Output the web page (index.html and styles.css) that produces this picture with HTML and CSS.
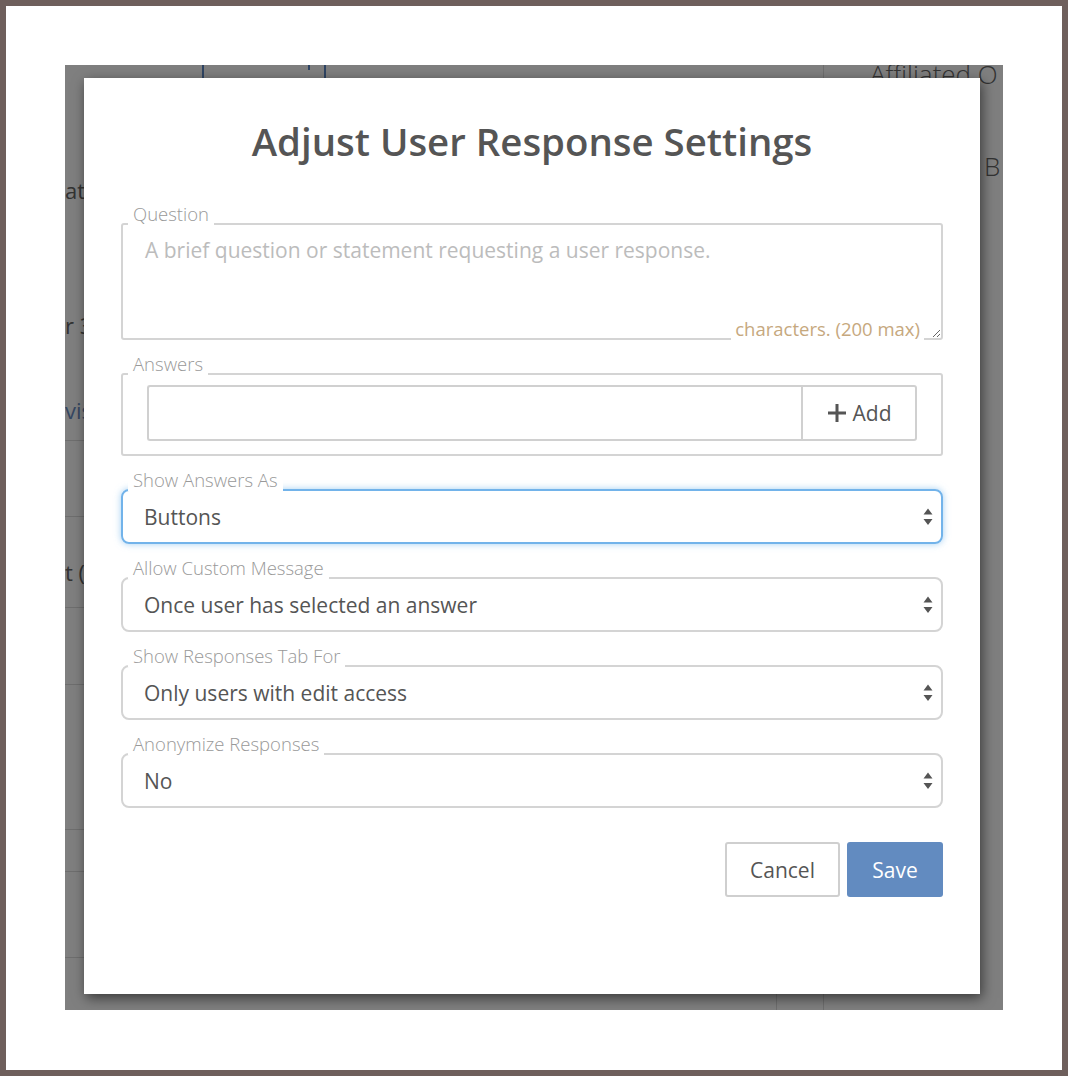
FILE: index.html
```html
<!DOCTYPE html>
<html lang="en">
<head>
  <meta charset="UTF-8">
  <title>Adjust User Response Settings</title>
  <link rel="stylesheet" href="styles.css">
</head>
<body>
  <div class="frame">
    <div class="screen">
      <!-- page behind the dialog -->
      <div class="page">
        <div class="page-main">
          <div class="bg-tabs"><span class="bg-tab"><i class="bg-dot"></i></span></div>
          <div class="bg-block">
            <p class="bg-text bg-text-1">at</p>
            <p class="bg-text bg-text-2">r 3</p>
            <p class="bg-text bg-text-3 bg-link">vis</p>
          </div>
          <div class="bg-row bg-row-1"></div>
          <div class="bg-row bg-row-2"><p class="bg-text">t (</p></div>
          <div class="bg-row bg-row-3"></div>
          <div class="bg-row bg-row-4"></div>
          <div class="bg-row bg-row-5"></div>
          <div class="bg-row bg-row-6"></div>
          <div class="bg-row-last"><span class="bg-cell"></span></div>
        </div>
        <div class="page-side">
          <p class="side-title">Affiliated O</p>
          <p class="side-text">B</p>
        </div>
      </div>

      <div class="backdrop"></div>

      <div class="modal">
        <h1 class="modal-title">Adjust User Response Settings</h1>
        <form class="form">
          <div class="field">
            <label class="field-label" for="question">Question</label>
            <textarea id="question" class="field-textarea" placeholder="A brief question or statement requesting a user response."></textarea>
            <div class="counter">characters. (200 max)</div>
          </div>

          <div class="field">
            <span class="field-label">Answers</span>
            <div class="answers-box">
              <div class="input-group">
                <input type="text" class="input-text">
                <button type="button" class="add-btn">
                  <svg width="20" height="20" viewBox="0 0 20 20"><path d="M10 1v18M1 10h18" stroke="#555" stroke-width="3" fill="none"/></svg>
                  Add
                </button>
              </div>
            </div>
          </div>

          <div class="field">
            <span class="field-label">Show Answers As</span>
            <div class="select select-focus">
              <span>Buttons</span>
              <svg class="arrows" width="10" height="18" viewBox="0 0 10 18"><path d="M5 0.5L9.5 6.5H0.5Z M0.5 11H9.5L5 17Z" fill="#555"/></svg>
            </div>
          </div>

          <div class="field">
            <span class="field-label">Allow Custom Message</span>
            <div class="select">
              <span>Once user has selected an answer</span>
              <svg class="arrows" width="10" height="18" viewBox="0 0 10 18"><path d="M5 0.5L9.5 6.5H0.5Z M0.5 11H9.5L5 17Z" fill="#555"/></svg>
            </div>
          </div>

          <div class="field">
            <span class="field-label">Show Responses Tab For</span>
            <div class="select">
              <span>Only users with edit access</span>
              <svg class="arrows" width="10" height="18" viewBox="0 0 10 18"><path d="M5 0.5L9.5 6.5H0.5Z M0.5 11H9.5L5 17Z" fill="#555"/></svg>
            </div>
          </div>

          <div class="field">
            <span class="field-label">Anonymize Responses</span>
            <div class="select">
              <span>No</span>
              <svg class="arrows" width="10" height="18" viewBox="0 0 10 18"><path d="M5 0.5L9.5 6.5H0.5Z M0.5 11H9.5L5 17Z" fill="#555"/></svg>
            </div>
          </div>

          <div class="actions">
            <button type="button" class="btn btn-cancel">Cancel</button>
            <button type="button" class="btn btn-save">Save</button>
          </div>
        </form>
      </div>
    </div>
  </div>
</body>
</html>
```

FILE: styles.css
```css
body {
  margin: 0;
  background: #6e5f5c;
  font-family: "Open Sans", "Liberation Sans", sans-serif;
}
.frame {
  margin: 6px;
  height: 1064px;
  box-sizing: border-box;
  padding: 59px 0 0 59px;
  background: #fff;
}
.screen {
  position: relative;
  width: 938px;
  height: 945px;
  overflow: hidden;
  background: #fff;
}

/* page behind */
.page {
  display: flex;
  height: 100%;
  color: #666;
}
.page-main {
  flex: 0 0 758px;
  display: flex;
  flex-direction: column;
}
.bg-tabs {
  height: 13px;
}
.bg-tab {
  display: block;
  position: relative;
  margin-left: 137px;
  width: 120px;
  height: 20px;
  border-left: 2px solid #5d88c6;
  border-right: 2px solid #5d88c6;
}
.bg-dot {
  position: absolute;
  left: 104px;
  top: 0;
  width: 2px;
  height: 5px;
  background: #5d88c6;
}
.bg-block {
  height: 363px;
  border-bottom: 1px solid #ddd;
  box-sizing: border-box;
}
.bg-text {
  margin: 0;
  font-size: 22px;
  line-height: 30px;
  white-space: nowrap;
}
.bg-text-1 {
  margin-top: 97px;
}
.bg-text-2 {
  margin-top: 105px;
}
.bg-text-3 {
  margin-top: 55px;
}
.bg-link {
  color: #6d8fc4;
}
.bg-row {
  border-bottom: 1px solid #ddd;
  box-sizing: border-box;
}
.bg-row-1 { height: 76px; }
.bg-row-2 { height: 91px; padding-top: 40px; }
.bg-row-3 { height: 77px; }
.bg-row-4 { height: 145px; }
.bg-row-5 { height: 42px; }
.bg-row-6 { height: 86px; }
.bg-row-last {
  flex: 1;
}
.bg-cell {
  display: block;
  margin-left: 711px;
  width: 1px;
  height: 100%;
  background: #ddd;
}
.page-side {
  flex: 1;
  min-width: 0;
  border-left: 1px solid #ddd;
}
.side-title {
  margin: -6px 0 0;
  padding-left: 46px;
  font-size: 26px;
  font-weight: 300;
  line-height: 30px;
  white-space: nowrap;
}
.side-text {
  margin: 62px 0 0;
  padding-left: 160px;
  font-size: 26px;
  font-weight: 300;
  line-height: 30px;
}

.backdrop {
  position: absolute;
  inset: 0;
  background: rgba(0, 0, 0, 0.5);
}

/* dialog */
.modal {
  position: absolute;
  top: 13px;
  left: 19px;
  width: 896px;
  height: 916px;
  box-sizing: border-box;
  padding: 40px 37px 0;
  background: #fff;
  box-shadow: 2px 4px 12px rgba(0, 0, 0, 0.55);
}
.modal-title {
  margin: 0 0 38px;
  text-align: center;
  font-size: 38.4px;
  font-weight: 600;
  line-height: 47px;
  color: #555;
}
.form {
  display: flex;
  flex-direction: column;
  gap: 13px;
}
.field {
  display: flex;
  flex-direction: column;
  align-items: flex-start;
}
.field-label {
  position: relative;
  z-index: 1;
  margin: 0 0 -2px 7px;
  padding: 0 5px;
  background: #fff;
  font-size: 18.5px;
  font-weight: 300;
  line-height: 22px;
  color: #999;
}
.field-textarea {
  align-self: stretch;
  height: 117px;
  box-sizing: border-box;
  margin: 0;
  padding: 11px 22px;
  border: 2px solid #d4d4d4;
  border-radius: 3px;
  font-family: inherit;
  font-size: 21px;
  line-height: 29px;
  color: #555;
  resize: vertical;
  outline: none;
}
.field-textarea::placeholder {
  color: #bcbcbc;
}
.counter {
  position: relative;
  align-self: flex-end;
  margin: -22px 19px 0 0;
  padding: 0 4px;
  background: #fff;
  font-size: 18.5px;
  line-height: 22px;
  color: #c6a87e;
}
.answers-box {
  align-self: stretch;
  padding: 10px 24px 13px;
  border: 2px solid #d4d4d4;
  border-radius: 3px;
}
.input-group {
  display: flex;
  height: 56px;
}
.input-text {
  flex: 1;
  margin: 0;
  border: 2px solid #d0d0d0;
  border-right: 0;
  border-radius: 3px 0 0 3px;
  outline: none;
}
.add-btn {
  display: flex;
  align-items: center;
  justify-content: center;
  gap: 6px;
  width: 116px;
  margin: 0;
  border: 2px solid #d0d0d0;
  border-radius: 0 3px 3px 0;
  background: #fff;
  font-family: inherit;
  font-size: 21px;
  color: #555;
}
.select {
  align-self: stretch;
  display: flex;
  align-items: center;
  justify-content: space-between;
  height: 55px;
  box-sizing: border-box;
  padding: 0 8px 0 21px;
  border: 2px solid #d4d4d4;
  border-radius: 8px;
  font-size: 21px;
  color: #555;
}
.select-focus {
  border-color: #72b3ea;
  box-shadow: 0 0 7px rgba(102, 175, 233, 0.6);
}
.actions {
  display: flex;
  justify-content: flex-end;
  gap: 7px;
  margin-top: 21px;
}
.btn {
  height: 55px;
  margin: 0;
  border-radius: 3px;
  font-family: inherit;
  font-size: 21px;
}
.btn-cancel {
  width: 115px;
  border: 2px solid #cfcfcf;
  background: #fff;
  color: #555;
}
.btn-save {
  width: 96px;
  border: 0;
  background: #628bc0;
  color: #fff;
}
```
